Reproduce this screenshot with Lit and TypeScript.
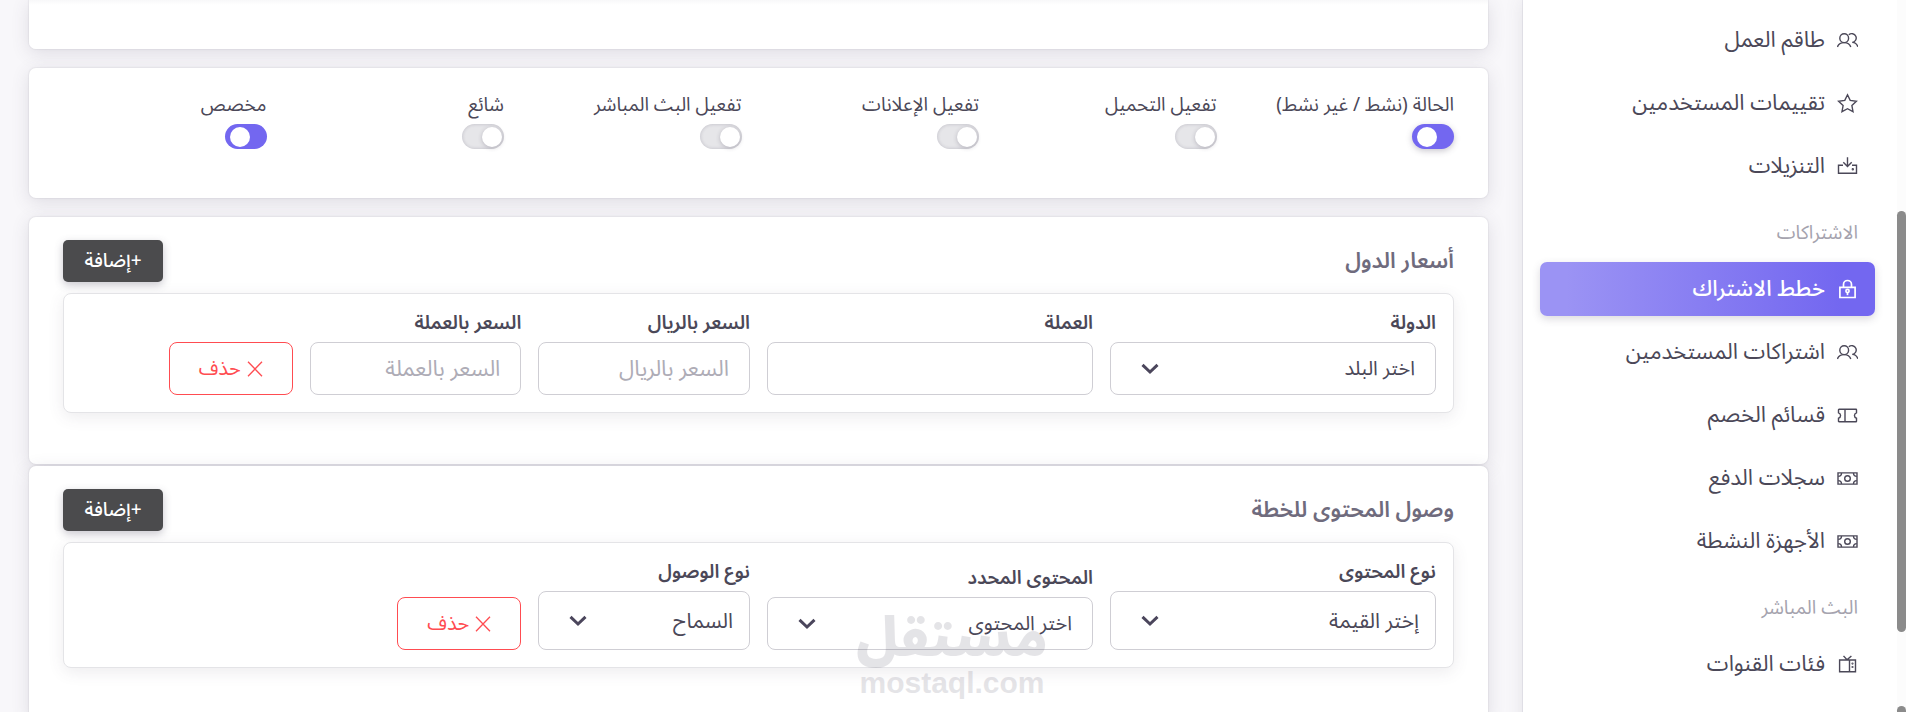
import { LitElement, html, css, svg, nothing } from "lit";
import { customElement, property } from "lit/decorators.js";
import { classMap } from "lit/directives/class-map.js";

const icons = {
  users: svg`<circle cx="7.2" cy="8.2" r="4.4"/><path d="M.4 17c.8-2.400 3.200-4.400 6.800-4.400S13 14.600 13.800 17"/><path d="M11.800 4.800a4.400 4.400 0 1 1 3.400 7.600M15.200 12.400c3 .2 4.900 2 5.600 4.400"/>`,
  star: svg`<path d="M10.500 1.800l2.700 5.600 6.200.8-4.500 4.300 1.100 6.100-5.500-2.900L5 18.600l1.100-6.100L1.600 8.200l6.200-.8z"/>`,
  download: svg`<path d="M6 9.300H1.500v7.900h18V9.300H15M10.500 1.300v8.500M6.300 6.300l4.200 4.200 4.200-4.200"/><circle cx="15.800" cy="13.300" r=".5" fill="currentColor"/>`,
  lock: svg`<g stroke-width="1.700"><path d="M2.900 8.300h15.200v10.200H2.900z"/><path d="M6.500 8.300V5.500a4 4 0 0 1 8 0v2.800"/><circle cx="10.500" cy="12" r="1.600"/><path d="M10.500 13.400v2.800"/></g>`,
  ticket: svg`<path d="M2 4.300h17a.5.500 0 0 1 .5.500v3a2.800 2.800 0 0 0 0 5.400v3a.5.500 0 0 1-.5.500H2a.5.500 0 0 1-.5-.5v-3a2.800 2.800 0 0 0 0-5.400v-3A.5.500 0 0 1 2 4.300zM8 4.500v12"/>`,
  cash: svg`<path d="M1 4.900h19v11.200H1z"/><circle cx="10.500" cy="10.500" r="2.800"/><path d="M4.500 5c0 2-1.300 3.400-3.300 3.400M16.500 5c0 2 1.300 3.400 3.300 3.400M4.500 16c0-2-1.300-3.400-3.300-3.400M16.500 16c0-2 1.300-3.400 3.300-3.400"/>`,
  tv: svg`<path d="M2.600 6h15.900v11.800H2.600zM12.500 6v11.800M6.500 1.900L10 5.800l4.400-3.900"/><circle cx="15.500" cy="9.600" r=".4" fill="currentColor"/><circle cx="15.500" cy="13" r=".4" fill="currentColor"/>`,
};
type IconName = keyof typeof icons;

interface MenuGroup {
  title?: string;
  items: { label: string; icon: IconName; active?: boolean }[];
}

const menu: MenuGroup[] = [
  {
    items: [
      { label: "طاقم العمل", icon: "users" },
      { label: "تقييمات المستخدمين", icon: "star" },
      { label: "التنزيلات", icon: "download" },
    ],
  },
  {
    title: "الاشتراكات",
    items: [
      { label: "خطط الاشتراك", icon: "lock", active: true },
      { label: "اشتراكات المستخدمين", icon: "users" },
      { label: "قسائم الخصم", icon: "ticket" },
      { label: "سجلات الدفع", icon: "cash" },
      { label: "الأجهزة النشطة", icon: "cash" },
    ],
  },
  { title: "البث المباشر", items: [{ label: "فئات القنوات", icon: "tv" }] },
];

const switches = [
  { id: "status", label: "الحالة (نشط / غير نشط)", on: true, raised: true },
  { id: "download", label: "تفعيل التحميل", on: false },
  { id: "ads", label: "تفعيل الإعلانات", on: false },
  { id: "live", label: "تفعيل البث المباشر", on: false },
  { id: "popular", label: "شائع", on: false },
  { id: "custom", label: "مخصص", on: true },
];

@customElement("side-menu")
class SideMenu extends LitElement {
  static styles = css`
    :host {
      display: flex;
      background: #fff;
      box-shadow: 0 0 18px rgba(75, 70, 92, 0.12), 0 0 0 1px #e9e8ee;
      color: #4b4858;
      font-size: 22px;
    }
    .track {
      flex: none;
      width: 9px;
      background: #fcfcfc;
      display: flex;
      flex-direction: column;
      padding-top: 211px;
      gap: 74px;
    }
    .thumb {
      flex: none;
      height: 421px;
      border-radius: 6px;
      background: #8b8b8b;
    }
    nav {
      flex: 1;
      min-width: 0;
      padding: 13px 22px 0 17px;
    }
    ul {
      list-style: none;
      margin: 0;
      padding: 0;
      display: flex;
      flex-direction: column;
      gap: 9px;
    }
    h2 {
      margin: 0;
      padding: 27px 17px 16px;
      font-size: 19px;
      line-height: 26px;
      font-weight: 400;
      color: #a5a3ae;
    }
    a {
      display: flex;
      align-items: center;
      gap: 12px;
      height: 54px;
      padding: 0 17px;
      color: inherit;
      text-decoration: none;
      border-radius: 7px;
      white-space: nowrap;
    }
    .active {
      color: #fff;
      font-weight: 500;
      background: linear-gradient(270deg, #7367f0 10%, #9b93f4 92%);
      box-shadow: 0 3px 9px rgba(75, 70, 92, 0.2);
    }
    svg {
      flex: none;
      width: 21px;
      height: 21px;
      fill: none;
      stroke: currentColor;
      stroke-width: 1.4;
    }
  `;
  render() {
    return html`
      <div class="track"><div class="thumb"></div><div class="thumb"></div></div>
      <nav>
        ${menu.map(
          (g) => html`
            ${g.title ? html`<h2>${g.title}</h2>` : nothing}
            <ul>
              ${g.items.map(
                (i) => html`<li>
                  <a href="#" class=${classMap({ active: !!i.active })}>
                    <svg viewBox="0 0 21 21" aria-hidden="true">${icons[i.icon]}</svg>
                    <span>${i.label}</span>
                  </a>
                </li>`
              )}
            </ul>
          `
        )}
      </nav>
    `;
  }
}

@customElement("plan-section")
class PlanSection extends LitElement {
  @property() heading = "";
  static styles = css`
    :host {
      display: block;
      padding: 23px 34px 51px;
      border-radius: 7px;
      background: #fff;
      box-shadow: 0 4px 18px rgba(75, 70, 92, 0.15), 0 0 1px 1px rgba(75, 70, 92, 0.06);
    }
    header {
      display: flex;
      justify-content: space-between;
      align-items: center;
      margin-bottom: 11px;
    }
    h2 {
      margin: 0;
      font-size: 22px;
      line-height: 32px;
      font-weight: 600;
      color: #6f6b7d;
    }
    button {
      height: 42px;
      min-width: 100px;
      padding: 0 20px;
      border: 0;
      border-radius: 5px;
      background: #4b4b4d;
      color: #fff;
      font: 500 19px/24px "Noto Sans Arabic", "Noto Sans", sans-serif;
      box-shadow: 0 3px 8px rgba(75, 70, 92, 0.3);
    }
    .row {
      display: grid;
      grid-template-columns: repeat(12, minmax(0, 1fr));
      align-items: end;
      gap: 17px;
      padding: 17px;
      border: 1px solid #e4e4e7;
      border-radius: 8px;
      background: #fff;
      box-shadow: 0 4px 16px rgba(75, 70, 92, 0.1);
    }
  `;
  render() {
    return html`
      <header>
        <h2>${this.heading}</h2>
        <button type="button">+إضافة</button>
      </header>
      <div class="row"><slot></slot></div>
    `;
  }
}

@customElement("app-root")
class AppRoot extends LitElement {
  static styles = css`
    :host {
      display: grid;
      grid-template-columns: 383px minmax(0, 1fr);
      position: relative;
      height: 100vh;
      overflow: hidden;
      direction: rtl;
      background: #f8f7fa;
      color: #4b4858;
      font: 400 19px/24px "Noto Sans Arabic", "Noto Sans", sans-serif;
    }
    main {
      min-width: 0;
      padding: 0 35px 0 29px;
    }
    .card {
      border-radius: 7px;
      background: #fff;
      box-shadow: 0 4px 18px rgba(75, 70, 92, 0.15), 0 0 1px 1px rgba(75, 70, 92, 0.06);
      margin-bottom: 19px;
    }
    .previous {
      height: 49px;
      border-radius: 0 0 7px 7px;
      background: linear-gradient(#f8f8f9, #fff 5px);
    }
    .switches {
      display: grid;
      grid-template-columns: repeat(6, minmax(0, 1fr));
      gap: 34px;
      padding: 25px 34px 49px;
    }
    .switch {
      display: flex;
      flex-direction: column;
      align-items: flex-start;
      gap: 7px;
      white-space: nowrap;
    }
    .toggle {
      appearance: none;
      display: flex;
      align-items: center;
      box-sizing: border-box;
      width: 42px;
      height: 25px;
      margin: 0;
      padding: 0 2px;
      border-radius: 13px;
      background: #e6e6e9;
      box-shadow: inset 0 0 3px 1px rgba(75, 70, 92, 0.16);
    }
    .toggle::before {
      content: "";
      width: 20px;
      height: 20px;
      border-radius: 50%;
      background: #fff;
      box-shadow: 0 1px 4px rgba(75, 70, 92, 0.3);
    }
    .toggle:checked {
      justify-content: flex-end;
      padding: 0 5px;
      background: #7367f0;
      box-shadow: none;
    }
    .toggle:checked::before {
      box-shadow: none;
    }
    .toggle.raised:checked {
      box-shadow: 0 2px 6px rgba(75, 70, 92, 0.3);
    }
    plan-section {
      margin-bottom: 2px;
    }
    .field {
      display: flex;
      flex-direction: column;
      gap: 7px;
      min-width: 0;
    }
    .wide {
      grid-column: span 3;
    }
    .narrow {
      grid-column: span 2;
    }
    .field label {
      font-weight: 600;
      white-space: nowrap;
    }
    input.control,
    select.control {
      appearance: none;
      box-sizing: border-box;
      width: 100%;
      height: 53px;
      margin: 0;
      padding: 0 20px;
      border: 1px solid #cfced4;
      border-radius: 8px;
      background-color: #fff;
      color: #4b4858;
      font: 400 20px/30px "Noto Sans Arabic", "Noto Sans", sans-serif;
    }
    input.control {
      font-size: 22px;
    }
    input.control::placeholder {
      color: #aeacb6;
      opacity: 1;
    }
    select.control {
      background-image: url("data:image/svg+xml,%3Csvg xmlns='http://www.w3.org/2000/svg' viewBox='0 0 18 12'%3E%3Cpath d='M1.500 1.800L9 9l7.500-7.200' fill='none' stroke='%234b465c' stroke-width='3'/%3E%3C/svg%3E");
      background-repeat: no-repeat;
      background-position: left 30px center;
      background-size: 18px 12px;
    }
    select.large {
      height: 59px;
      padding: 0 16px;
      font-size: 21px;
    }
    .remove {
      display: flex;
      justify-content: center;
      align-items: center;
      gap: 6px;
      width: 124px;
      height: 53px;
      padding: 0;
      border: 1px solid #ff4c51;
      border-radius: 8px;
      background: #fff;
      color: #ff4c51;
      font: 400 20px/30px "Noto Sans Arabic", "Noto Sans", sans-serif;
    }
    .remove svg {
      width: 16px;
      height: 16px;
      fill: none;
      stroke: currentColor;
      stroke-width: 1.3;
    }
    .watermark {
      position: absolute;
      left: 952px;
      bottom: 12px;
      transform: translateX(-50%);
      display: flex;
      flex-direction: column;
      align-items: center;
      color: #4b465c;
      opacity: 0.14;
      font-weight: 700;
      pointer-events: none;
    }
    .brand {
      font-size: 54px;
      line-height: 54px;
      font-weight: 900;
    }
    .domain {
      direction: ltr;
      font-family: "Liberation Sans", sans-serif;
      font-size: 30px;
      line-height: 34px;
    }
  `;

  private removeButton() {
    return html`<button class="remove narrow" type="button">
      <svg viewBox="0 0 16 16" aria-hidden="true"><path d="M1 .8l14 14.400M15 .8L1 15.200" /></svg>
      <span>حذف</span>
    </button>`;
  }

  private selectField(id: string, label: string, value: string, width: string, large = false) {
    return html`<div class="field ${width}">
      <label for=${id}>${label}</label>
      <select id=${id} class=${classMap({ control: true, large })}>
        <option>${value}</option>
      </select>
    </div>`;
  }

  private inputField(id: string, label: string, placeholder: string, width: string) {
    return html`<div class="field ${width}">
      <label for=${id}>${label}</label>
      <input id=${id} class="control" type="text" placeholder=${placeholder} />
    </div>`;
  }

  render() {
    return html`
      <side-menu></side-menu>
      <main>
        <section class="card previous"></section>
        <section class="card switches">
          ${switches.map(
            (s) => html`<div class="switch">
              <label for=${s.id}>${s.label}</label>
              <input
                id=${s.id}
                type="checkbox"
                class=${classMap({ toggle: true, raised: !!s.raised })}
                ?checked=${s.on}
              />
            </div>`
          )}
        </section>
        <plan-section heading="أسعار الدول">
          ${this.selectField("country", "الدولة", "اختر البلد", "wide")}
          ${this.inputField("currency", "العملة", "", "wide")}
          ${this.inputField("price-sar", "السعر بالريال", "السعر بالريال", "narrow")}
          ${this.inputField("price-currency", "السعر بالعملة", "السعر بالعملة", "narrow")}
          ${this.removeButton()}
        </plan-section>
        <plan-section heading="وصول المحتوى للخطة">
          ${this.selectField("content-type", "نوع المحتوى", "إختر القيمة", "wide", true)}
          ${this.selectField("content", "المحتوى المحدد", "اختر المحتوى", "wide")}
          ${this.selectField("access", "نوع الوصول", "السماح", "narrow", true)}
          ${this.removeButton()}
        </plan-section>
      </main>
      <div class="watermark">
        <span class="brand">مستقل</span>
        <span class="domain">mostaql.com</span>
      </div>
    `;
  }
}
